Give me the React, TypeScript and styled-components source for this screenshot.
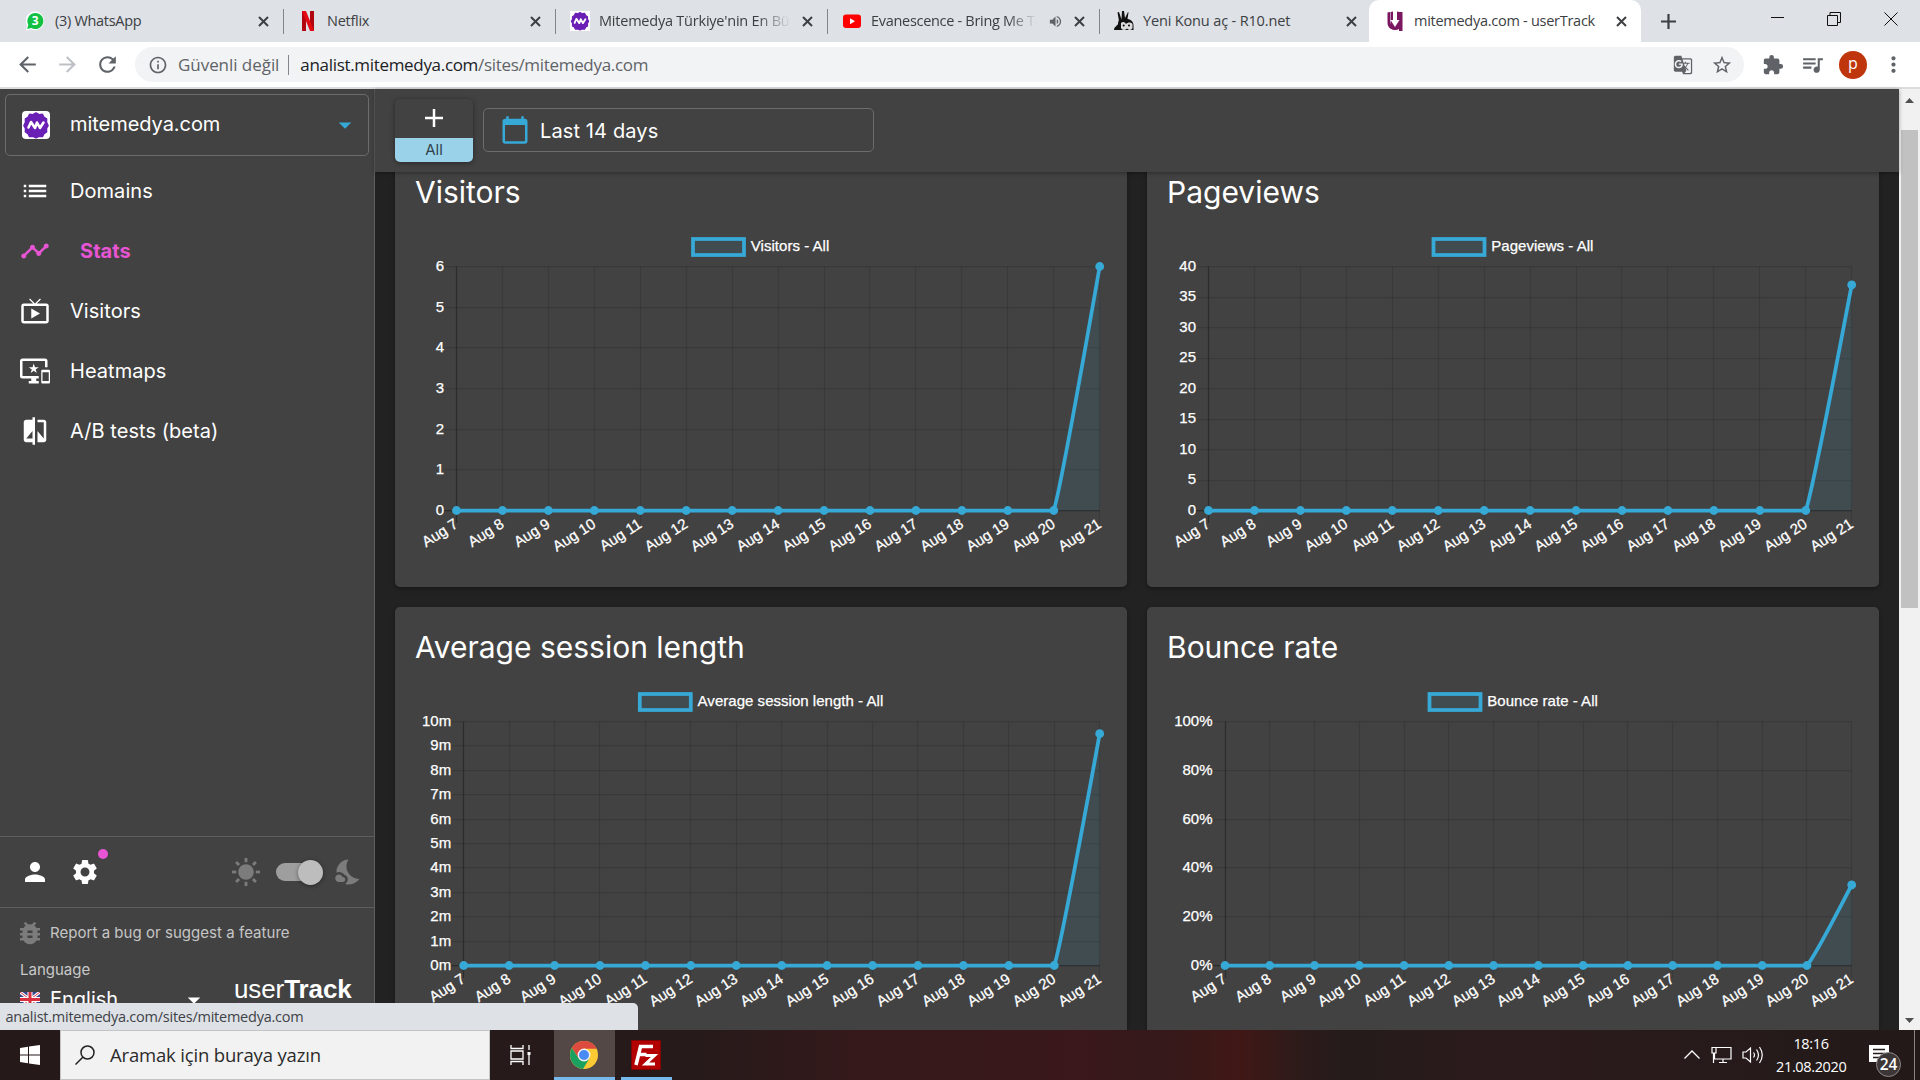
import React from "react";
import styled, { createGlobalStyle } from "styled-components";
import {
  MdList,
  MdTimeline,
  MdLiveTv,
  MdImportantDevices,
  MdCompare,
  MdPerson,
  MdSettings,
  MdNightsStay,
  MdBugReport,
  MdArrowDropDown,
  MdCalendarToday,
  MdArrowBack,
  MdArrowForward,
  MdRefresh,
  MdInfoOutline,
  MdGTranslate,
  MdStarBorder,
  MdExtension,
  MdQueueMusic,
  MdMoreVert,
  MdVolumeUp,
} from "react-icons/md";

const SYSTEM = `"Open Sans", "Noto Sans", sans-serif`;
const APP = `Inter, Roboto, sans-serif`;
const ARIAL = `"Liberation Sans", Arial, sans-serif`;
const ACCENT = "#36a9d6";
const PANEL = "#424242";

const GlobalStyle = createGlobalStyle`
  html, body { margin: 0; padding: 0; overflow: hidden; background: #222; }
  * { box-sizing: border-box; }
  svg { display: block; flex-shrink: 0; }
`;

const Screen = styled.div`
  position: relative;
  width: 1920px;
  height: 1080px;
  display: flex;
  flex-direction: column;
  overflow: hidden;
  font-family: ${SYSTEM};
`;

/* ---------- browser chrome ---------- */

const TabStrip = styled.div`
  height: 42px;
  display: flex;
  padding-left: 12px;
  background: #dee1e6;
`;

const TabBox = styled.div<{ $active?: boolean; $line?: boolean }>`
  position: relative;
  width: 272px;
  height: 42px;
  display: flex;
  align-items: center;
  padding: 0 15px 0 14px;
  color: #3c4043;
  background: ${(p) => (p.$active ? "#fff" : "transparent")};
  border-radius: 10px 10px 0 0;
  ${(p) => p.$active && "margin-left: -3px; padding-left: 16px; padding-right: 14px;"}
  &::after {
    content: "";
    position: absolute;
    right: 0;
    top: 9px;
    width: 1px;
    height: 25px;
    background: ${(p) => (p.$line ? "#80868b" : "transparent")};
  }
`;

const Favicon = styled.div`
  width: 20px;
  height: 20px;
  margin-right: 9px;
`;

const TabTitle = styled.div<{ $fade?: boolean; $spacing?: number }>`
  flex: 1;
  overflow: hidden;
  white-space: nowrap;
  font-size: 14.5px;
  line-height: 22px;
  letter-spacing: ${(p) => p.$spacing ?? -0.27}px;
  ${(p) => p.$fade && "mask-image: linear-gradient(90deg, #000 82%, transparent);"}
`;

const TabButton = styled.div`
  display: flex;
  margin-left: 11px;
`;

const NewTab = styled.div`
  display: flex;
  align-items: center;
  margin-left: 20px;
`;

const WindowButtons = styled.div`
  display: flex;
  align-items: flex-start;
  gap: 43px;
  margin-left: auto;
  padding: 12px 22px 0 0;
`;

const Toolbar = styled.div`
  height: 47px;
  display: flex;
  align-items: center;
  padding-left: 15px;
  background: #fff;
  border-bottom: 2px solid #dadce0;
  color: #5f6368;
`;

const NavButton = styled.div<{ $dim?: boolean }>`
  width: 25px;
  margin-right: 15px;
  flex-shrink: 0;
  color: ${(p) => (p.$dim ? "#bdc1c6" : "#5f6368")};
`;

const AddressBar = styled.div`
  width: 1609px;
  height: 35px;
  flex-shrink: 0;
  display: flex;
  align-items: center;
  padding: 0 11px 0 13px;
  border-radius: 18px;
  background: #f1f3f4;
  font-size: 17px;
`;

const Security = styled.span`
  margin-left: 10px;
  letter-spacing: -0.05px;
`;

const AddressRule = styled.i`
  width: 1px;
  height: 20px;
  margin: 0 11px 0 9px;
  background: #80868b;
`;

const Url = styled.span`
  flex: 1;
  letter-spacing: -0.32px;
  b { font-weight: 400; color: #202124; }
`;

const AddressIcons = styled.div`
  display: flex;
  align-items: center;
  gap: 18px;
`;

const ToolbarIcons = styled.div`
  display: flex;
  align-items: center;
  margin-left: 18px;
  gap: 14px;
  svg:first-child { margin-right: 2px; }
`;

const Avatar = styled.div`
  width: 28px;
  height: 28px;
  display: flex;
  justify-content: center;
  border-radius: 50%;
  background: #bf360c;
  color: #fff;
  font: 16px/25px ${SYSTEM};
`;

/* ---------- page ---------- */

const Page = styled.div`
  height: 941px;
  display: flex;
  background: #222;
  font-family: ${APP};
  color: #fff;
`;

const Sidebar = styled.aside`
  width: 375px;
  height: 100%;
  display: flex;
  flex-direction: column;
  overflow: hidden;
  background: ${PANEL};
  border-right: 1px solid #5e5e5e;
`;

const SitePicker = styled.div`
  height: 62px;
  margin: 5px 5px 5px;
  padding: 0 8px 0 16px;
  display: flex;
  align-items: center;
  border: 1px solid #6c6c6c;
  border-radius: 5px;
  font-size: 20px;
  span { flex: 1; margin-left: 20px; padding-bottom: 2px; letter-spacing: -0.05px; }
`;

const SiteIcon = styled.div`
  width: 28px;
  height: 28px;
  border-radius: 4px;
  overflow: hidden;
`;

const NavItem = styled.div<{ $active?: boolean }>`
  height: 60px;
  display: flex;
  align-items: center;
  gap: ${(p) => (p.$active ? 30 : 20)}px;
  padding-left: 20px;
  font-size: 20px;
  font-weight: ${(p) => (p.$active ? 700 : 400)};
  letter-spacing: 0.05px;
  color: ${(p) => (p.$active ? "#e754d4" : "#fff")};
`;

const SettingsRow = styled.div`
  height: 71px;
  margin-top: auto;
  padding: 0 10px 0 20px;
  display: flex;
  align-items: center;
  border-top: 1px solid #5e5e5e;
`;

const Gear = styled.div`
  position: relative;
  margin-left: 20px;
  &::after {
    content: "";
    position: absolute;
    left: 28px;
    top: -8px;
    width: 10px;
    height: 10px;
    border-radius: 50%;
    background: #e754d4;
  }
`;

const ThemeControls = styled.div`
  display: flex;
  align-items: center;
  margin-left: auto;
  color: #7c7c7c;
`;

const SwitchTrack = styled.div`
  width: 43px;
  height: 18px;
  margin: 0 15px 0 15px;
  display: flex;
  align-items: center;
  border-radius: 9px;
  background: #9e9e9e;
  i {
    flex-shrink: 0;
    width: 25px;
    height: 25px;
    margin-left: 22px;
    border-radius: 50%;
    background: #bdbdbd;
    box-shadow: 0 1px 4px rgba(0, 0, 0, 0.4);
  }
`;

const Footer = styled.div`
  height: 123px;
  padding: 10px 20px 0;
  border-top: 1px solid #5e5e5e;
  color: #c9c9c9;
`;

const BugLink = styled.div`
  height: 30px;
  margin-left: -5px;
  display: flex;
  align-items: center;
  gap: 5px;
  font-size: 15px;
  color: #7c7c7c;
  span { color: #c6c6c6; letter-spacing: 0.04px; padding-bottom: 2px; }
`;

const FooterColumns = styled.div`
  display: flex;
  align-items: flex-start;
`;

const LanguageLabel = styled.div`
  margin-top: 12px;
  height: 20px;
  font-size: 15px;
  line-height: 20px;
`;

const LanguageSelect = styled.div`
  width: 189px;
  height: 30px;
  display: flex;
  align-items: center;
  margin-top: 4px;
  color: #fff;
  font-size: 20px;
  span { flex: 1; margin-left: 10px; }
  svg:last-child { margin-top: 1px; }
`;

const Brand = styled.div`
  margin: 29px 0 0 25px;
  font: 26px/25px ${ARIAL};
  letter-spacing: -0.1px;
  color: #fff;
  white-space: nowrap;
`;

const Main = styled.main`
  width: 1524px;
  height: 100%;
  display: flex;
  flex-direction: column;
`;

const TopBar = styled.div`
  position: relative;
  z-index: 1;
  height: 83px;
  flex-shrink: 0;
  display: flex;
  align-items: flex-start;
  padding: 10px 20px 0;
  background: ${PANEL};
  box-shadow: 0 1px 4px rgba(0, 0, 0, 0.35);
`;

const Segment = styled.div`
  width: 78px;
  height: 63px;
  border-radius: 5px;
  overflow: hidden;
  box-shadow: 0 1px 5px rgba(0, 0, 0, 0.4);
`;

const SegmentAdd = styled.div`
  height: 39px;
  display: flex;
  align-items: center;
  justify-content: center;
  padding: 0 1px 1px 0;
`;

const SegmentName = styled.div`
  height: 24px;
  background: #9ad2ea;
  color: #33444c;
  font-size: 15px;
  line-height: 24px;
  text-align: center;
`;

const DateRange = styled.div`
  width: 391px;
  height: 44px;
  margin: 9px 0 0 10px;
  padding-left: 16px;
  display: flex;
  align-items: center;
  gap: 10px;
  border: 1px solid #6c6c6c;
  border-radius: 5px;
  font-size: 20px;
  letter-spacing: 0.12px;
  svg { color: ${ACCENT}; }
  span { padding-top: 2px; }
`;

const Scroller = styled.div`
  flex: 1;
  min-height: 0;
  overflow: hidden;
`;

const CardGrid = styled.div`
  margin: -20px 20px 0;
  display: grid;
  grid-template-columns: 732px 732px;
  grid-auto-rows: 435px;
  gap: 20px;
`;

const Card = styled.section`
  padding: 20px;
  background: ${PANEL};
  border-radius: 5px;
  box-shadow: 0 2px 4px rgba(0, 0, 0, 0.3);
`;

const CardTitle = styled.h2`
  height: 40px;
  margin: 0;
  font-size: 30px;
  font-weight: 400;
  line-height: 40px;
`;

const ScrollTrack = styled.div`
  width: 21px;
  display: flex;
  flex-direction: column;
  align-items: center;
  background: #f1f1f1;
  i { width: 17px; height: 478px; margin-top: 27px; background: #c1c1c1; }
  svg:first-child { margin-top: 9px; }
  svg:last-child { margin: auto 0 7px; }
`;

const StatusBubble = styled.div`
  position: absolute;
  left: 0;
  top: 1003px;
  width: 638px;
  height: 27px;
  padding-left: 5.5px;
  border-radius: 0 5px 0 0;
  background: #dee1e6;
  color: #3f4347;
  font: 14.5px/27px ${SYSTEM};
  letter-spacing: -0.24px;
`;

/* ---------- taskbar ---------- */

const Taskbar = styled.div`
  height: 50px;
  display: flex;
  color: #fff;
  background: linear-gradient(
    90deg, #251919 0, #271a1a 700px, #35191b 860px, #3a181b 1080px, #35191b 1160px,
    #401816 1240px, #2c1b1a 1300px, #251b1b 1350px, #2c1b1c 1500px, #251a1a 1800px, #241919 1920px);
`;

const StartButton = styled.div`
  width: 60px;
  display: flex;
  align-items: center;
  justify-content: center;
`;

const SearchBox = styled.div`
  width: 430px;
  display: flex;
  align-items: center;
  padding-left: 14px;
  border: 1px solid #c4c4c4;
  background: #f2f2f2;
  color: #2b2b2b;
  font-size: 18.5px;
  letter-spacing: -0.17px;
  span { margin-left: 15px; padding-bottom: 2px; }
`;

const TaskButton = styled.div<{ $w: number; $active?: boolean; $open?: boolean }>`
  width: ${(p) => p.$w}px;
  display: flex;
  align-items: center;
  justify-content: center;
  padding-right: 2px;
  background: ${(p) => (p.$active ? "#544846" : "transparent")};
  box-shadow: ${(p) => (p.$open ? "inset 0 -3px #76b9ed" : "none")};
`;

const Tray = styled.div`
  margin-left: auto;
  display: flex;
  align-items: center;
  gap: 10px;
`;

const Clock = styled.div`
  width: 70px;
  margin-left: 3px;
  font-size: 14.5px;
  line-height: 23px;
  letter-spacing: -0.35px;
  text-align: center;
  white-space: nowrap;
`;

const Notifications = styled.div`
  width: 56px;
  height: 50px;
  margin-left: 2px;
`;

const DesktopPeek = styled.div`
  width: 6px;
  height: 50px;
  margin-left: -10px;
  border-left: 1px solid #8a8282;
`;

/* ---------- icons ---------- */

const CloseX = () => (
  <svg width="11" height="11" viewBox="0 0 11 11" stroke="#3c4043" strokeWidth="2">
    <path d="M1 1l9 9M10 1l-9 9" />
  </svg>
);

const MiteLogo = ({ size }: { size: number }) => (
  <svg width={size} height={size} viewBox="0 0 28 28">
    <rect width="28" height="28" fill="#fff" />
    <path
      fill="#6a1fb5"
      stroke="#6a1fb5"
      strokeWidth="1.5"
      strokeLinejoin="round"
      d="M14 2l3 1.700 3.400-.4 1.600 3 2.600 1.600-.1 3.400 1.600 3.200-1.600 3 .1 3.400-2.600 1.700-1.600 3-3.400-.3-3 1.400-3-1.400-3.400.3-1.600-3-2.600-1.700.1-3.400-1.600-3 1.600-3.200-.1-3.400 2.600-1.600 1.600-3 3.400.4z"
    />
    <path d="M6.500 16.500l2.500-5.500 4 6 2-5.500 3 5.500 3.500-5.500" fill="none" stroke="#fff" strokeWidth="2.600" strokeLinejoin="round" strokeLinecap="round" />
  </svg>
);

const WhatsAppIcon = () => (
  <svg width="20" height="20" viewBox="0 0 20 20">
    <path fill="#fff" d="M9.300 .5a9.300 9.300 0 1 1-4.300 17.800L0 19.500 1 14.500A9.300 9.300 0 0 1 9.300.5z" />
    <path fill="#12c143" d="M9.300 2a8 8 0 1 1-4 14.900L1.200 18l1.100-4.200A8 8 0 0 1 9.300 2z" />
    <text x="9.300" y="14.300" fontSize="12" fontWeight="700" fill="#fff" textAnchor="middle" fontFamily="Open Sans, sans-serif">3</text>
  </svg>
);

const NetflixIcon = () => (
  <svg width="20" height="20" viewBox="0 0 20 20">
    <path fill="#b1060f" d="M4 0h4v20H4zM12 0h4v20h-4z" />
    <path fill="#e50914" d="M4 0h4l8 20h-4z" />
  </svg>
);

const YoutubeIcon = () => (
  <svg width="20" height="20" viewBox="0 0 20 20">
    <rect x="1" y="3.500" width="18" height="13.500" rx="3" fill="#f00" />
    <path d="M8 7.200v6l5-3z" fill="#fff" />
  </svg>
);

const R10Icon = () => (
  <svg width="20" height="20" viewBox="0 0 20 20">
    <path fill="#111" d="M5 10L3.500 1.500 5 1l2.500 7.500L8 0h2l1 7 3-6 .5.500-1 6.500c4 .5 6 3 6 7v4H0c0-3 3-4 4-6 0-2 .5-3 1-4z" />
    <path fill="#dcdcdc" d="M7 12c2-2 4-1 5 1 2-2 5-2 6.500 0v4c-1 2.500-4 2.500-5.500.5-1.500 2-5 2-6-.5z" />
    <circle cx="9.700" cy="14.500" r="1" />
    <circle cx="15" cy="14.500" r="1" />
  </svg>
);

const UserTrackIcon = () => (
  <svg width="20" height="20" viewBox="0 0 20 20" fill="#7b1760">
    <path d="M2.500 1.500L5 1v9.500C5 12 7 15 10 18.500c-5 .5-7.500-3-7.500-7z" />
    <path d="M5.500 1L8 .500V9H5.500l4.500 7 4.500-7H12V.5l2.500.500H17.500V20H14v-2c-2 1.500-6 1.500-8.500-1z" />
  </svg>
);

const WindowIcons = () => (
  <WindowButtons>
    <svg width="13" height="13" stroke="#111" strokeWidth="1"><path d="M0 5.500h13" /></svg>
    <svg width="14" height="14" fill="none" stroke="#111"><path d="M.5 3.500h10v10H.5zM3 3.500V.5h10.500v10h-3" /></svg>
    <svg width="14" height="14" stroke="#111"><path d="M.5 .5l13 13M13.500 .5l-13 13" /></svg>
  </WindowButtons>
);

const SunIcon = () => (
  <svg width="30" height="30" viewBox="-15 -15 30 30">
    <circle r="7.800" fill="#7c7c7c" />
    {[0, 45, 90, 135, 180, 225, 270, 315].map((a) => (
      <rect key={a} x="-1.400" y="-14" width="2.800" height="4.200" fill="#7c7c7c" transform={`rotate(${a})`} />
    ))}
  </svg>
);

const FlagUK = () => (
  <svg width="20" height="15" viewBox="0 0 20 15">
    <rect width="20" height="15" fill="#34478f" />
    <path d="M0 0l20 15M20 0L0 15" stroke="#fff" strokeWidth="3" />
    <path d="M0 0l20 15M20 0L0 15" stroke="#d8404c" strokeWidth="1" />
    <path d="M10 0v15M0 7.500h20" stroke="#fff" strokeWidth="5" />
    <path d="M10 0v15M0 7.500h20" stroke="#d8303e" strokeWidth="3" />
  </svg>
);

const ChromeIcon = () => (
  <svg width="28" height="28" viewBox="-14 -14 28 28">
    <circle r="14" fill="#fbc934" />
    <path d="M0-6.300L12.600-6.300A14 14 0 0 0-12.100-7L-5.500 3.200z" fill="#dd4b3e" />
    <path d="M-12.100-7A14 14 0 0 0-1 14L5.500 3.200 0 6-5.500 3.200z" fill="#1aa15f" />
    <circle r="6.400" fill="#f2f2f2" />
    <circle r="5" fill="#4a8af4" />
  </svg>
);

const FileZillaIcon = () => (
  <svg width="30" height="30" viewBox="0 0 30 30">
    <rect x=".5" y=".5" width="29" height="29" fill="#b30000" stroke="#8a0000" strokeDasharray="2 1" />
    <g fill="none" stroke="#fff" strokeWidth="3.600">
      <path d="M5 25L9.500 6.500H22M7.500 14.500h8" />
      <path d="M14.500 15.500h9L14.500 24h9.500" strokeWidth="3" />
    </g>
  </svg>
);

/* ---------- chart ---------- */

type ChartSpec = {
  title: string;
  axisX: number;
  ticks: string[];
  value: number;
  legendX: number;
};

const CHARTS: ChartSpec[] = [
  { title: "Visitors", axisX: 41.5, ticks: ["6", "5", "4", "3", "2", "1", "0"], value: 1, legendX: 276.5 },
  { title: "Pageviews", axisX: 41.5, ticks: ["40", "35", "30", "25", "20", "15", "10", "5", "0"], value: 0.925, legendX: 265 },
  {
    title: "Average session length",
    axisX: 48.7,
    ticks: ["10m", "9m", "8m", "7m", "6m", "5m", "4m", "3m", "2m", "1m", "0m"],
    value: 0.95,
    legendX: 223.3,
  },
  { title: "Bounce rate", axisX: 58, ticks: ["100%", "80%", "60%", "40%", "20%", "0%"], value: 0.33, legendX: 261 },
];

const TOP = 54.5;
const BOTTOM = 298.5;
const RIGHT = 684.7;
const DAYS = Array.from({ length: 15 }, (_, i) => `Aug ${i + 7}`);

const ChartText = styled.text`
  font-family: ${ARIAL};
  font-size: 15px;
  fill: #fff;
  stroke: #fff;
  stroke-width: 0.25px;
`;

const ChartSvg = styled.svg`
  overflow: visible;
`;

function LineChart({ spec }: { spec: ChartSpec }) {
  const { axisX, ticks, value, legendX, title } = spec;
  const step = (RIGHT - axisX) / 14;
  const xs = DAYS.map((_, i) => axisX + i * step);
  const yEnd = BOTTOM - (BOTTOM - TOP) * value;
  const knee = xs[13];
  const rise = `M${knee} ${BOTTOM}C${knee + 7} ${BOTTOM + (yEnd - BOTTOM) * 0.09} ${RIGHT} ${yEnd} ${RIGHT} ${yEnd}`;
  return (
    <ChartSvg width="692" height="355">
      {xs.map((x, i) => (
        <path
          key={i}
          d={`M${Math.floor(x) + 0.5} ${TOP}V${BOTTOM + 12.5}`}
          stroke={i === 0 ? "rgba(0,0,0,.32)" : "rgba(0,0,0,.12)"}
          strokeWidth="1.250"
        />
      ))}
      {ticks.map((t, i) => {
        const y = TOP + ((BOTTOM - TOP) * i) / (ticks.length - 1);
        return (
          <g key={t}>
            <path
              d={`M${axisX - 12.5} ${Math.floor(y) + 0.5}H${RIGHT}`}
              stroke={i === ticks.length - 1 ? "rgba(0,0,0,.32)" : "rgba(0,0,0,.12)"}
              strokeWidth="1.250"
            />
            <ChartText x={axisX - 12.5} y={y + 4.4} textAnchor="end">{t}</ChartText>
          </g>
        );
      })}
      <path d={`${rise}V${BOTTOM}Z`} fill={ACCENT} fillOpacity=".1" />
      <path d={`M${axisX} ${BOTTOM}H${knee}`} stroke={ACCENT} strokeWidth="3.750" />
      <path d={rise} fill="none" stroke={ACCENT} strokeWidth="3.750" />
      {xs.map((x, i) => (
        <circle key={i} cx={x} cy={i === 14 ? yEnd : BOTTOM} r="4.400" fill={ACCENT} />
      ))}
      {xs.map((x, i) => (
        <ChartText key={i} textAnchor="end" transform={`translate(${x} ${BOTTOM + 12}) rotate(-32.5)`} y="4.800">
          {DAYS[i]}
        </ChartText>
      ))}
      <rect x={legendX + 1.5} y="27" width="51" height="16" fill={ACCENT} fillOpacity=".1" stroke={ACCENT} strokeWidth="3.750" />
      <ChartText x={legendX + 59.3} y="39" letterSpacing="0.03">{title} - All</ChartText>
    </ChartSvg>
  );
}

/* ---------- data ---------- */

const TABS = [
  { title: "(3) WhatsApp", icon: <WhatsAppIcon />, line: true, spacing: -0.3 },
  { title: "Netflix", icon: <NetflixIcon />, line: true },
  { title: "Mitemedya Türkiye'nin En Büyük", icon: <MiteLogo size={20} />, line: true, fade: true, spacing: -0.22 },
  { title: "Evanescence - Bring Me To", icon: <YoutubeIcon />, line: true, fade: true, sound: true, spacing: -0.3 },
  { title: "Yeni Konu aç - R10.net", icon: <R10Icon />, spacing: -0.15 },
  { title: "mitemedya.com - userTrack", icon: <UserTrackIcon />, active: true },
];

const NAV = [
  { label: "Domains", Icon: MdList },
  { label: "Stats", Icon: MdTimeline, active: true },
  { label: "Visitors", Icon: MdLiveTv },
  { label: "Heatmaps", Icon: MdImportantDevices },
  { label: "A/B tests (beta)", Icon: MdCompare },
];

export default function App() {
  return (
    <Screen>
      <GlobalStyle />
      <TabStrip>
        {TABS.map((t) => (
          <TabBox key={t.title} $active={t.active} $line={t.line}>
            <Favicon>{t.icon}</Favicon>
            <TabTitle $fade={t.fade} $spacing={t.spacing}>{t.title}</TabTitle>
            {t.sound && <TabButton><MdVolumeUp size={15} color="#5f6368" /></TabButton>}
            <TabButton><CloseX /></TabButton>
          </TabBox>
        ))}
        <NewTab>
          <svg width="15" height="15" stroke="#3c4043" strokeWidth="2.200"><path d="M7.500 0v15M0 7.500h15" /></svg>
        </NewTab>
        <WindowIcons />
      </TabStrip>

      <Toolbar>
        <NavButton><MdArrowBack size={25} /></NavButton>
        <NavButton $dim><MdArrowForward size={25} /></NavButton>
        <NavButton><MdRefresh size={25} /></NavButton>
        <AddressBar>
          <MdInfoOutline size={20} />
          <Security>Güvenli değil</Security>
          <AddressRule />
          <Url><b>analist.mitemedya.com</b>/sites/mitemedya.com</Url>
          <AddressIcons>
            <MdGTranslate size={20} />
            <MdStarBorder size={22} />
          </AddressIcons>
        </AddressBar>
        <ToolbarIcons>
          <MdExtension size={22} />
          <MdQueueMusic size={25} />
          <Avatar>p</Avatar>
          <MdMoreVert size={25} />
        </ToolbarIcons>
      </Toolbar>

      <Page>
        <Sidebar>
          <SitePicker>
            <SiteIcon><MiteLogo size={28} /></SiteIcon>
            <span>mitemedya.com</span>
            <MdArrowDropDown size={30} color={ACCENT} />
          </SitePicker>
          {NAV.map(({ label, Icon, active }) => (
            <NavItem key={label} $active={active}>
              <Icon size={30} />
              {label}
            </NavItem>
          ))}
          <SettingsRow>
            <MdPerson size={30} />
            <Gear><MdSettings size={30} /></Gear>
            <ThemeControls>
              <SunIcon />
              <SwitchTrack><i /></SwitchTrack>
              <MdNightsStay size={30} />
            </ThemeControls>
          </SettingsRow>
          <Footer>
            <BugLink>
              <MdBugReport size={30} />
              <span>Report a bug or suggest a feature</span>
            </BugLink>
            <FooterColumns>
              <div>
                <LanguageLabel>Language</LanguageLabel>
                <LanguageSelect>
                  <FlagUK />
                  <span>English</span>
                  <MdArrowDropDown size={30} />
                </LanguageSelect>
              </div>
              <Brand>
                user<b>Track</b>
                <svg width="34" height="4" stroke="#a01ca8" strokeWidth="1.500"><path d="M0 3l6-2M9 2h4M15 3l5-2M23 2h5" /></svg>
              </Brand>
            </FooterColumns>
          </Footer>
        </Sidebar>

        <Main>
          <TopBar>
            <Segment>
              <SegmentAdd>
                <svg width="18" height="18" stroke="#fff" strokeWidth="2.500"><path d="M9 0v18M0 9h18" /></svg>
              </SegmentAdd>
              <SegmentName>All</SegmentName>
            </Segment>
            <DateRange>
              <MdCalendarToday size={30} />
              <span>Last 14 days</span>
            </DateRange>
          </TopBar>
          <Scroller>
            <CardGrid>
              {CHARTS.map((c) => (
                <Card key={c.title}>
                  <CardTitle>{c.title}</CardTitle>
                  <LineChart spec={c} />
                </Card>
              ))}
            </CardGrid>
          </Scroller>
        </Main>

        <ScrollTrack>
          <svg width="9" height="5" fill="#505050"><path d="M0 5L4.500 0 9 5z" /></svg>
          <i />
          <svg width="9" height="5" fill="#505050"><path d="M0 0h9L4.500 5z" /></svg>
        </ScrollTrack>
      </Page>

      <Taskbar>
        <StartButton>
          <svg width="20" height="20" fill="#fff"><path d="M0 3l8-1.200V9.500H0zM9 1.600L20 0v9.500H9zM0 10.500h8v7.700L0 17zM9 10.500h11V20L9 18.400z" /></svg>
        </StartButton>
        <SearchBox>
          <svg width="20" height="20" fill="none" stroke="#222" strokeWidth="1.500"><circle cx="12.500" cy="7.500" r="6.500" /><path d="M8 12l-7.500 7.500" /></svg>
          <span>Aramak için buraya yazın</span>
        </SearchBox>
        <TaskButton $w={64}>
          <svg width="22" height="20" fill="none" stroke="#fff" strokeWidth="1.300" viewBox="0 0 22 20"><path d="M1 0v3.500h12V0M1 6h12v8H1zM1 20v-3.500h12V20M19 0v5M19 10v10" /><path d="M17.500 8.500h3" strokeWidth="3" /></svg>
        </TaskButton>
        <TaskButton $w={61} $active $open><ChromeIcon /></TaskButton>
        <TaskButton $w={6} />
        <TaskButton $w={51} $open><FileZillaIcon /></TaskButton>
        <Tray>
          <svg width="18" height="14" fill="none" stroke="#fff" strokeWidth="1.300"><path d="M1.500 10.500L9 3l7.500 7.500" /></svg>
          <svg width="21" height="18" fill="none" stroke="#fff" strokeWidth="1.200"><path d="M5 1.500h15v11.500H3.500V7M1 1.500h4V7H1zM2.500 7v10M12 13v3.500M8 16.500h8" /></svg>
          <svg width="21" height="20" fill="none" stroke="#fff" strokeWidth="1.200"><path d="M1 7v6h3l4.500 4V3L4 7zM11.500 7.500q2 2.500 0 5M14.500 4.500q4 5.500 0 11M17.500 2q5.500 8 0 16" /></svg>
          <Clock>18:16<br />21.08.2020</Clock>
          <Notifications>
            <svg width="56" height="50">
              <path d="M11 15h20v17H15l-4 0z" fill="#fff" />
              <path d="M15 19.500h12M15 23.500h12M15 27.500h7" stroke="#251a1a" strokeWidth="1.300" />
              <circle cx="30.500" cy="34.500" r="12" fill="#3d3636" stroke="#8d8888" />
              <text x="30.500" y="40" fontSize="15.500" fontWeight="600" fill="#fff" textAnchor="middle" fontFamily="Open Sans, sans-serif">24</text>
            </svg>
          </Notifications>
          <DesktopPeek />
        </Tray>
      </Taskbar>

      <StatusBubble>analist.mitemedya.com/sites/mitemedya.com</StatusBubble>
    </Screen>
  );
}
